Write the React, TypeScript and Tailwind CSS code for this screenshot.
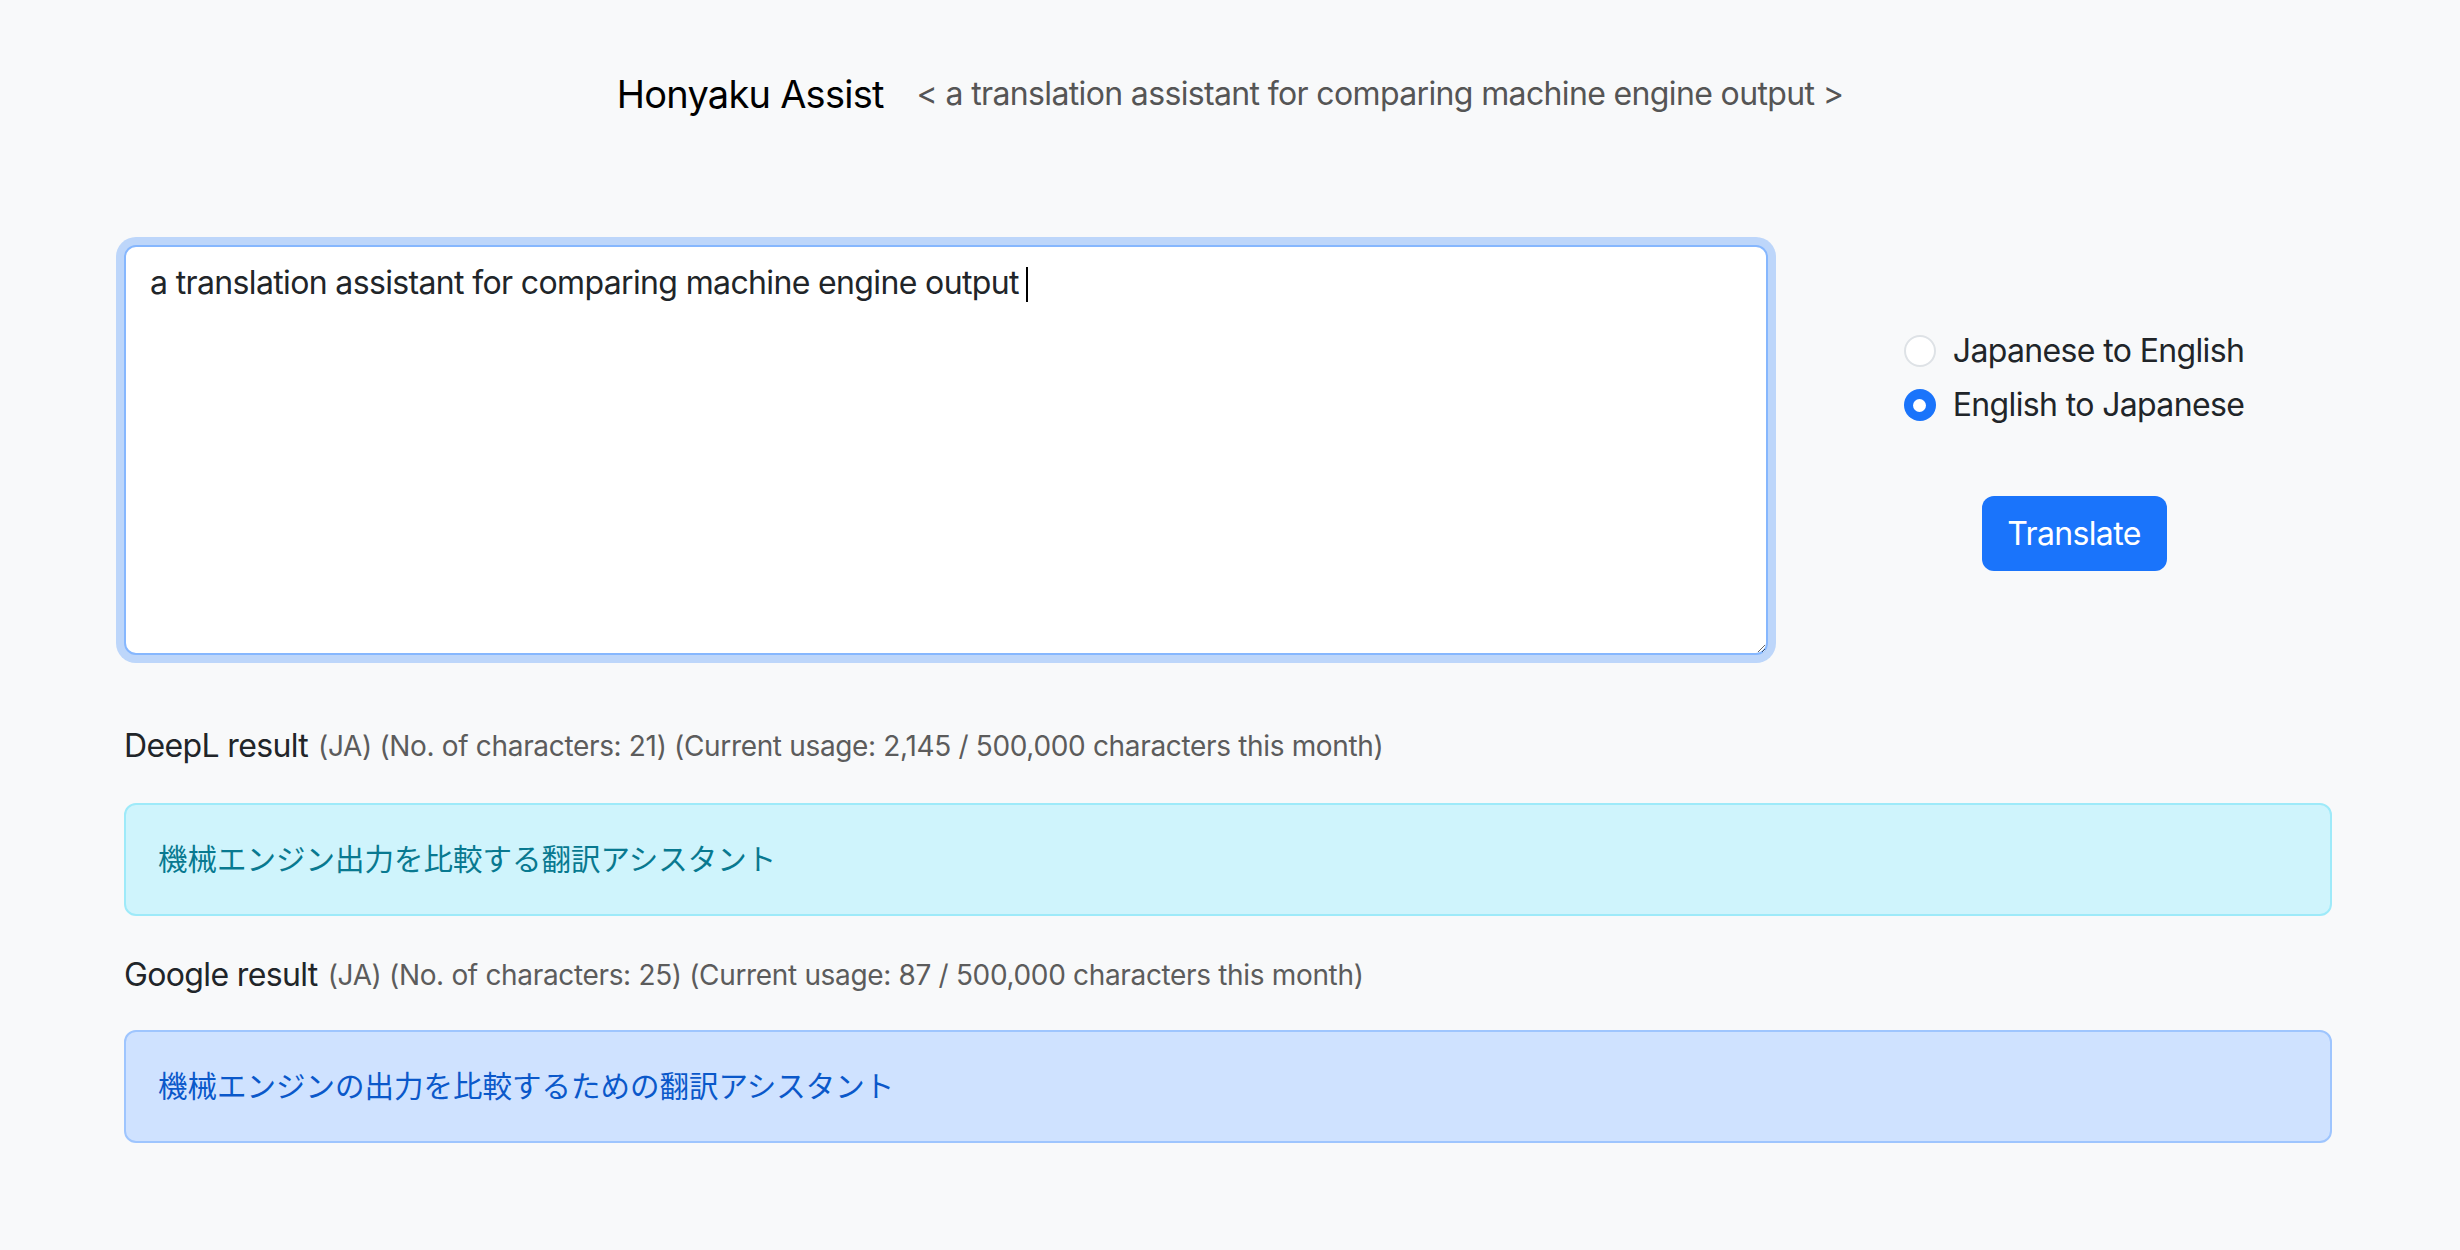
import { useState } from 'react'

type Direction = 'ja-en' | 'en-ja'

const font = { fontFamily: 'Inter, "Noto Sans CJK JP", sans-serif' }

function ResultLabel({ engine, chars, usage }: { engine: string; chars: number; usage: string }) {
  return (
    <div className="h-[48px] flex items-center whitespace-nowrap">
      <span className="text-[32px] tracking-[-0.02em] text-[#212529]">{engine} result</span>
      <span className="ml-[10px] text-[28px] tracking-[-0.012em] text-[#5c5c5c]">
        (JA) (No. of characters: {chars}) (Current usage: {usage} / 500,000 characters this month)
      </span>
    </div>
  )
}

function Radio({ checked, label, onSelect }: { checked: boolean; label: string; onSelect: () => void }) {
  return (
    <label className="h-[54px] flex items-center cursor-pointer" onClick={onSelect}>
      {checked ? (
        <span className="w-[32px] h-[32px] rounded-full bg-[#1a74fb] flex items-center justify-center">
          <span className="w-[13px] h-[13px] rounded-full bg-white" />
        </span>
      ) : (
        <span className="w-[32px] h-[32px] rounded-full bg-white border-2 border-[#dee2e6]" />
      )}
      <span className="ml-[17px] text-[32px] tracking-[-0.02em] leading-[48px] text-[#212529]">{label}</span>
    </label>
  )
}

export default function App() {
  const [direction, setDirection] = useState<Direction>('en-ja')
  const [text, setText] = useState('a translation assistant for comparing machine engine output ')

  return (
    <div className="min-h-screen w-full bg-[#f8f9fa]" style={font}>
      {/* Header */}
      <div className="pt-[64px] flex justify-center items-center">
        <h1 className="text-[38px] tracking-[-0.02em] leading-[60px] text-black">Honyaku Assist</h1>
        <span className="ml-[33px] text-[32px] tracking-[-0.02em] leading-[48px] text-[#555555]">
          &lt; a translation assistant for comparing machine engine output &gt;
        </span>
      </div>

      <div className="w-[2208px] ml-[124px]">
        {/* Input row */}
        <div className="mt-[121px] flex">
          <div className="relative">
            <textarea
              value={text}
              onChange={(e) => setText(e.target.value)}
              className="block w-[1644px] h-[410px] bg-white border-2 border-[#86b7fe] rounded-[12px] px-[24px] py-[12px] text-[32px] tracking-[-0.02em] leading-[48px] text-[#212529] outline-none shadow-[0_0_0_8px_rgba(13,110,253,0.25)] caret-transparent"
            />
            {/* caret */}
            <span className="absolute left-[902px] top-[22px] w-[2px] h-[35px] bg-black" />
          </div>
          <div className="flex-1 pl-[48px] pt-[79px] flex flex-col items-center">
            <div className="flex flex-col">
              <Radio
                checked={direction === 'ja-en'}
                label="Japanese to English"
                onSelect={() => setDirection('ja-en')}
              />
              <Radio
                checked={direction === 'en-ja'}
                label="English to Japanese"
                onSelect={() => setDirection('en-ja')}
              />
            </div>
            <button className="mt-[64px] w-[185px] h-[75px] rounded-[12px] bg-[#1a74fb] text-white text-[32px] tracking-[-0.02em]">
              Translate
            </button>
          </div>
        </div>

        {/* DeepL */}
        <div className="mt-[67px]">
          <ResultLabel engine="DeepL" chars={21} usage="2,145" />
        </div>
        <div className="mt-[33px] h-[113px] border-2 border-[#9eeaf9] bg-[#cff4fc] rounded-[12px] px-[32px] flex items-center">
          <span className="text-[29.5px] text-[#087990]">機械エンジン出力を比較する翻訳アシスタント</span>
        </div>

        {/* Google */}
        <div className="mt-[35px]">
          <ResultLabel engine="Google" chars={25} usage="87" />
        </div>
        <div className="mt-[31px] h-[113px] border-2 border-[#9ec5fe] bg-[#cfe2ff] rounded-[12px] px-[32px] flex items-center">
          <span className="text-[29.5px] text-[#0a58ca]">機械エンジンの出力を比較するための翻訳アシスタント</span>
        </div>
      </div>
    </div>
  )
}
